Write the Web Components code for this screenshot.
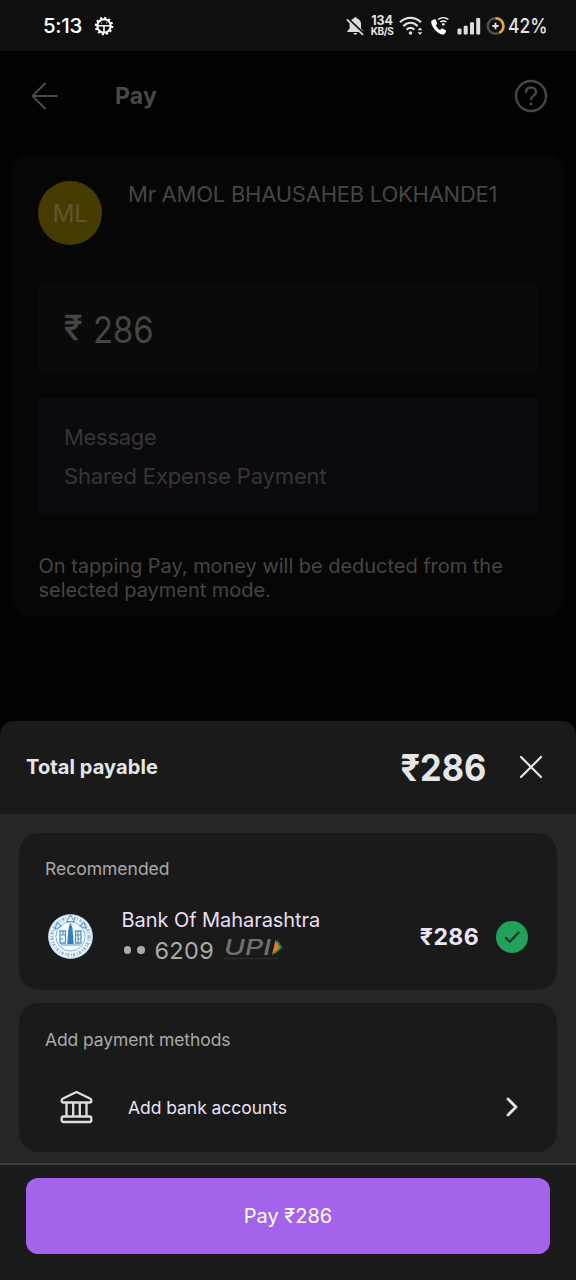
<!DOCTYPE html>
<html lang="en">
<head>
<meta charset="utf-8">
<title>Pay</title>
<style>
html,body{margin:0;padding:0;background:#000}
body{font-family:Inter,"Liberation Sans",sans-serif;width:576px;height:1280px;overflow:hidden}
</style>
</head>
<body>
<pay-screen></pay-screen>
<script>
function define(name, markup){
  const t=document.createElement('template');
  t.innerHTML=markup;
  customElements.define(name,class extends HTMLElement{
    constructor(){super();this.attachShadow({mode:'open'}).appendChild(t.content.cloneNode(true));}
  });
}

define('status-bar',`
<style>
:host{display:flex;box-sizing:border-box;height:51px;background:#0f0f0f;color:#e4e4e4;align-items:center;padding:1px 30px 0 43px;font-weight:500}
.time{font-size:20.5px;width:50.500px;color:#fff;letter-spacing:-.3px;white-space:nowrap;margin-top:-1px}
.gap{flex:1}
svg{display:block;flex:none}
.speed{width:24px;margin:0 5px 0 4px;text-align:center;font-weight:700;font-size:12.500px;line-height:10px;letter-spacing:-.2px}
.speed div{height:10px}
.speed div+div{font-size:10px;line-height:10px;letter-spacing:-.4px}
.pct{font-size:20px;width:38px;margin-left:3px;white-space:nowrap;transform:scaleX(.87);transform-origin:left;margin-top:-1px}
</style>
<span class="time">5:13</span>
<svg width="20" height="20" viewBox="0 0 20 20" fill="none" stroke="#fff"><circle cx="10" cy="10" r="8.2" stroke-width="2" stroke-dasharray="2.1 2.19"/><circle cx="10" cy="10" r="6.7" stroke-width="2"/><path d="M3.5 9.7h13M10 10v6.5" stroke-width="1.6"/><path d="M7 6.8h.8M12.2 6.8h.8" stroke-width="1.2"/></svg>
<span class="gap"></span>
<svg width="20" height="20" viewBox="0 0 20 20"><path fill="#ddd" d="M9.3 1.2c.9 0 1.5.5 1.6 1.3 2.6.7 4.1 2.7 4.1 5.3v4.6l2.2 2.7v.8H1.4v-.8l2.2-2.7V7.8c0-2.6 1.5-4.6 4.1-5.3.1-.8.7-1.3 1.6-1.3zM7.4 17h3.8c-.1 1-.9 1.7-1.9 1.7S7.500 18 7.400 17z"/><path d="M1.800 2.600l16 15.400" stroke="#0f0f0f" stroke-width="2.600"/><path d="M.8 3.400l16.200 15.400" stroke="#ddd" stroke-width="1.800"/></svg>
<div class="speed"><div>134</div><div>KB/S</div></div>
<svg width="25" height="20" viewBox="0 0 25 20" fill="none" stroke="#ddd" stroke-width="2.300"><path d="M1 6.300C6.800.3 16.200.3 22 6.300M4.300 10.100c4.400-4.200 10-4.200 14.400 0M7.600 13.600c2.400-2.100 5.400-2.100 7.800 0"/><circle cx="11.500" cy="17" r="1.800" fill="#ddd" stroke="none"/><path d="M18.600 14.200l2.400-2.700 2.400 2.700zM18.600 16.300h4.800L21 19z" fill="#ddd" stroke="none"/></svg>
<svg style="margin:0 7px 0 6px" width="20" height="20" viewBox="0 0 20 20"><path fill="#fff" d="M4.600 3.200L2 4.300C.8 5 1.100 8 3.200 11.400c2.200 3.400 5.500 6.300 8.700 7 1.700.3 2.600-.1 3.200-1.200l.9-1.700c.2-.5 0-1-.4-1.300l-2.900-1.600c-.5-.3-1-.2-1.400.2l-1.300 1.300C8.300 13.200 6.700 11.400 5.900 9.600l1-1.600c.3-.4.3-.8.1-1.300L5.800 3.800c-.2-.6-.7-.8-1.200-.6z"/><g fill="none" stroke="#fff" stroke-width="1.500"><path d="M8.200 3.500c3-2.400 7.200-2.400 10.200 0M10.300 6c1.800-1.300 4.200-1.300 6 0"/></g><circle cx="13.300" cy="8.300" r="1.300" fill="#fff"/></svg>
<svg width="24" height="20" viewBox="0 0 24 20" fill="#ddd"><rect x=".5" y="12.500" width="4" height="6" rx="1"/><rect x="6.700" y="9.700" width="4" height="8.800" rx="1"/><rect x="13" y="6.300" width="4" height="12.200" rx="1"/><rect x="19.200" y="2" width="4" height="16.500" rx="1"/></svg>
<svg style="margin-left:5px" width="19" height="20" viewBox="0 0 19 20" fill="none"><circle cx="9.500" cy="10" r="7.800" stroke="#55524e" stroke-width="2.400"/><path d="M9.500 2.200a7.800 7.800 0 0 1 3.900 14.550" stroke="#f0a528" stroke-width="2.600"/><path d="M6.300 10h6.400M9.500 6.800v6.400" stroke="#ddd" stroke-width="1.900"/></svg>
<span class="pct">42%</span>`);

define('app-bar',`
<style>
:host{display:flex;align-items:center;box-sizing:border-box;height:90px;padding:0 28px 0 31px;color:#484848}
.title{flex:1;margin-left:57px;font-size:23px;font-weight:700;letter-spacing:.2px}
svg{display:block}
</style>
<svg width="27" height="28" viewBox="0 0 27 28" fill="none" stroke="#4a4a4a" stroke-width="2" stroke-linecap="round" stroke-linejoin="round"><path d="M26 14H1.500M14 1.500L1.500 14 14 26.500"/></svg>
<span class="title"><slot></slot></span>
<svg width="34" height="34" viewBox="0 0 34 34" fill="none" stroke="#484848" stroke-width="2.300" stroke-linecap="round"><circle cx="17" cy="17" r="15"/><path d="M12 13.300c0-3 2.100-4.800 5-4.800s5 1.800 5 4.400c0 2.200-1.200 3.200-2.900 4.200-1.400.9-2.100 1.700-2.100 3.300"/><circle cx="17" cy="25" r="1.500" fill="#484848" stroke="none"/></svg>`);

define('payee-card',`
<style>
:host{display:block;box-sizing:border-box;margin:14px 12px 0;padding:26px;height:462px;border-radius:16px;background:#060606;color:#454545}
.who{display:flex;height:102px}
.avatar{width:64px;height:64px;border-radius:50%;background:#463b00;color:#5d5732;display:grid;place-items:center;font-size:24.500px;letter-spacing:-.4px}
.name{margin:-1px 0 0 26px;font-size:22px;line-height:28px;white-space:nowrap;letter-spacing:-.24px}
.amount{box-sizing:border-box;height:90px;border-radius:6px;background:#0a0a0a;padding:3px 26px 0;display:flex;align-items:center;font-size:36.500px;color:#454545;gap:12px}
.amount span{display:block}
.val{transform:scaleX(.9);transform-origin:left}
.rupee{font-size:34px;position:relative;top:-2px;margin-right:-1px;-webkit-text-stroke:.5px #454545}
.msg{box-sizing:border-box;height:117px;margin-top:25px;border-radius:6px;background:#0c090f;padding:20px 26px;font-size:22px;line-height:39px;color:#37353a;letter-spacing:-.15px}
.msg div:first-child{letter-spacing:-.3px}
.note{margin:39px 0 0 .5px;font-size:20px;line-height:24px;color:#454545;white-space:nowrap;letter-spacing:-.03px}
</style>
<div class="who"><div class="avatar">ML</div><div class="name"><slot name="name"></slot></div></div>
<div class="amount"><span class="rupee">₹</span><span class="val"><slot name="amount"></slot></span></div>
<div class="msg"><div>Message</div><div><slot name="message"></slot></div></div>
<div class="note">On tapping Pay, money will be deducted from the<br>selected payment mode.</div>`);

define('sheet-header',`
<style>
:host{display:flex;align-items:center;box-sizing:border-box;height:93px;padding:0 33px 0 26px;background:#1a1a1a;border-radius:14px 14px 0 0;color:#e6e6e6;font-weight:700}
.label{flex:1;font-size:20px;letter-spacing:.1px;margin-top:-1px}
.total{font-size:36.500px;margin-right:33px;transform:scaleX(.94);transform-origin:right}
svg{display:block;margin-top:-1px}
</style>
<span class="label">Total payable</span><span class="total"><slot></slot></span>
<svg width="24" height="24" viewBox="0 0 24 24" stroke="#e6e6e6" stroke-width="2.200" stroke-linecap="round"><path d="M2 2l20 20M22 2L2 22"/></svg>`);

define('method-card',`
<style>
:host{display:block;box-sizing:border-box;border-radius:20px;background:#1a1a1a;padding:25px 26px 0}
.title{font-size:17.500px;line-height:22px;color:#a9a9a9}
:host(.add) .title{letter-spacing:-.1px;padding-top:1px;height:21px}
</style>
<div class="title"><slot name="title"></slot></div><slot></slot>`);

define('bank-seal',`
<style>:host{display:block;width:46px;height:46px}svg{display:block}</style>
<svg width="46" height="46" viewBox="0 0 46 46" fill="none"><circle cx="22.500" cy="22.500" r="22.300" fill="#f3f8fc"/><circle cx="22.500" cy="22.500" r="21.700" stroke="#a9c6de" stroke-width=".8"/><circle cx="22.500" cy="22.500" r="18.500" stroke="#70a6d2" stroke-width="3.200" stroke-dasharray="2.200 1.100 1 1.700" opacity=".75"/><circle cx="22.500" cy="22.500" r="14.600" fill="#f8fbfe" stroke="#74a8d5" stroke-width=".9"/><path d="M7 15.500l2-6.500 4.500 3zM18.800 7.500L22.500.800l3.700 6.700zM32 12l4-3.500 2 6z" fill="#f3f8fc" stroke="#5f9dcc" stroke-width="1.100"/><path d="M22.500 8.500l2 5.500 1.200 16h-6.400l1.200-16z" fill="#3480bd"/><path d="M12 17h5.500v12H12zM27.500 17H33v12h-5.500z" stroke="#5596ca" stroke-width="1.300"/><path d="M12 21h5.500M12 25h3.500M15 17v4M27.500 21H33M30 25h3M30 17v12M12.500 31h20" stroke="#5596ca" stroke-width="1.200"/></svg>`);

define('upi-mark',`
<style>:host{display:block;width:62px;height:24px}svg{display:block;overflow:visible}</style>
<svg width="62" height="24" viewBox="0 0 62 24"><text x="0" y="17" font-family="Inter,sans-serif" font-style="italic" font-weight="500" font-size="22" textLength="47" lengthAdjust="spacingAndGlyphs" fill="#707070">UPI</text><path d="M53.500 2l5 7.500-8.500 7.500z" fill="#188346"/><path d="M51.500 2l4.500 7.500-8 7.500z" fill="#e07a30"/><path d="M0 20.500h54" stroke="#303030" stroke-width="1.500" stroke-dasharray="2 .6"/></svg>`);

define('bank-row',`
<style>
:host{display:flex;align-items:center;height:66px;margin-top:24px;padding:0 3px}
.text{margin:-4px 0 0 27.500px;flex:1}
.name{font-size:20px;line-height:30px;color:#e9dff2;white-space:nowrap;letter-spacing:-.06px}
.acct{display:flex;align-items:center;height:31px;font-size:23.500px;color:#aaa}
.dots{display:flex;gap:6px;margin:0 10px 0 2px}
.dots i{width:7.500px;height:7.500px;border-radius:50%;background:#aaa}
.num{letter-spacing:.3px;width:60px;margin-right:9px}
.amt{font-size:23px;font-weight:700;color:#eee4f7;letter-spacing:.4px;margin-right:17px}
svg{display:block}
</style>
<bank-seal></bank-seal>
<div class="text"><div class="name"><slot name="bank"></slot></div><div class="acct"><span class="dots"><i></i><i></i></span><span class="num"><slot name="account"></slot></span><upi-mark></upi-mark></div></div>
<span class="amt"><slot name="amount"></slot></span>
<svg width="32" height="32" viewBox="0 0 32 32" fill="none"><circle cx="16" cy="16" r="16" fill="#22a15b"/><path d="M9.800 16.800l4 4 8.800-9.300" stroke="#183323" stroke-width="2.200" stroke-linecap="round" stroke-linejoin="round"/></svg>`);

define('add-row',`
<style>
:host{display:flex;align-items:center;height:60px;margin-top:27px;padding:0 12px 0 15px;font-size:17.500px;color:#e9e2f0}
span{flex:1;margin-left:35px;letter-spacing:-.05px}
svg{display:block}
</style>
<svg width="33" height="34" viewBox="0 0 33 34" fill="none" stroke="#dedede" stroke-width="2.300" stroke-linejoin="round"><path d="M16.500 2L30 8.500c.9.400 1.300 1 1.300 1.800v.7c0 1-.6 1.500-1.500 1.500H3.200c-.9 0-1.500-.5-1.500-1.500v-.7c0-.8.4-1.400 1.300-1.800z"/><rect x="1.700" y="26.500" width="29.600" height="5.500" rx="1.800"/><path d="M6.500 12.500v14M13.200 12.500v14M19.800 12.500v14M26.500 12.500v14"/></svg>
<span><slot></slot></span>
<svg width="14" height="20" viewBox="0 0 14 20" fill="none" stroke="#e6e6e6" stroke-width="2.800" stroke-linecap="round" stroke-linejoin="round"><path d="M3 2l8 8-8 8"/></svg>`);

define('pay-button',`
<style>
:host{display:flex;align-items:center;justify-content:center;height:76px;border-radius:12px;background:#a363ea;color:#fff;font-size:20px}
</style><slot></slot>`);

define('pay-screen',`
<style>
:host{display:flex;flex-direction:column;width:576px;height:1280px;background:#020202}
.sheet{display:flex;flex-direction:column;margin-top:auto;height:559px}
.body{box-sizing:border-box;height:349px;background:#262626;padding:19px 19px 0;display:flex;flex-direction:column;gap:13px}
.rec{height:157px}.add{height:149px}
.foot{box-sizing:border-box;height:117px;border-top:2px solid #3c3d3d;background:#1a1a1a;padding:13px 26px}
</style>
<status-bar></status-bar>
<app-bar>Pay</app-bar>
<payee-card><span slot="name">Mr AMOL BHAUSAHEB LOKHANDE1</span><span slot="amount">286</span><span slot="message">Shared Expense Payment</span></payee-card>
<div class="sheet">
<sheet-header>₹286</sheet-header>
<div class="body">
<method-card class="rec"><span slot="title">Recommended</span><bank-row><span slot="bank">Bank Of Maharashtra</span><span slot="account">6209</span><span slot="amount">₹286</span></bank-row></method-card>
<method-card class="add"><span slot="title">Add payment methods</span><add-row>Add bank accounts</add-row></method-card>
</div>
<div class="foot"><pay-button>Pay ₹286</pay-button></div>
</div>`);
</script>
</body>
</html>
